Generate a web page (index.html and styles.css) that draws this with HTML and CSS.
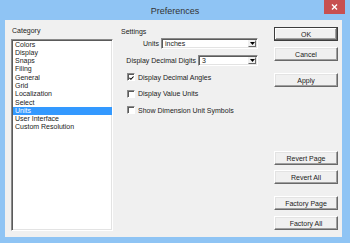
FILE: index.html
```html
<!DOCTYPE html>
<html>
<head>
<meta charset="utf-8">
<link rel="stylesheet" href="styles.css">
</head>
<body>
<div class="window">
  <div class="titlebar">
    <span class="title">Preferences</span>
    <span class="close"><svg width="7" height="6" viewBox="0 0 7 6"><path d="M1 0.5 L6 5.5 M6 0.5 L1 5.5" stroke="#fff" stroke-width="1.4"/></svg></span>
  </div>
  <div class="client">
    <div class="category">
      <div class="label">Category</div>
      <ul class="list">
        <li>Colors</li>
        <li>Display</li>
        <li>Snaps</li>
        <li>Filing</li>
        <li>General</li>
        <li>Grid</li>
        <li>Localization</li>
        <li>Select</li>
        <li class="sel">Units</li>
        <li>User Interface</li>
        <li>Custom Resolution</li>
      </ul>
    </div>
    <div class="settings">
      <div class="label">Settings</div>
      <div class="row row-units">
        <span class="row-label">Units</span>
        <div class="combo combo-wide"><span class="combo-text">inches</span><span class="drop"><svg width="5" height="3" viewBox="0 0 5 3"><path d="M0 0 H5 L2.5 3 Z" fill="#000"/></svg></span></div>
      </div>
      <div class="row row-digits">
        <span class="row-label">Display Decimal Digits</span>
        <div class="combo combo-narrow"><span class="combo-text">3</span><span class="drop"><svg width="5" height="3" viewBox="0 0 5 3"><path d="M0 0 H5 L2.5 3 Z" fill="#000"/></svg></span></div>
      </div>
      <div class="checks">
        <div class="check"><span class="box"><svg width="6" height="6" viewBox="0 0 6 6"><path d="M0.5 2.8 L2.3 4.6 L5.5 1.2" stroke="#000" stroke-width="1.3" fill="none"/></svg></span><span>Display Decimal Angles</span></div>
        <div class="check"><span class="box"></span><span>Display Value Units</span></div>
        <div class="check"><span class="box"></span><span>Show Dimension Unit Symbols</span></div>
      </div>
    </div>
    <div class="buttons">
      <div class="btn btn-default">OK</div>
      <div class="btn btn-cancel">Cancel</div>
      <div class="btn btn-apply">Apply</div>
      <div class="btn-group">
        <div class="btn">Revert Page</div>
        <div class="btn btn-revert-all">Revert All</div>
        <div class="btn btn-factory">Factory Page</div>
        <div class="btn btn-factory-all">Factory All</div>
      </div>
    </div>
  </div>
</div>
</body>
</html>
```

FILE: styles.css
```css
html, body {
  margin: 0;
  padding: 0;
  background: #ffffff;
}

.window {
  width: 350px;
  height: 243px;
  background: #8fc4f4;
  display: flex;
  flex-direction: column;
  font-family: "Liberation Sans", Arial, sans-serif;
  font-size: 7px;
  color: #222;
}

.titlebar {
  height: 20px;
  flex: none;
  position: relative;
  display: flex;
  align-items: center;
  justify-content: center;
}

.title {
  font-family: "Liberation Sans", Arial, sans-serif;
  font-size: 9px;
  font-weight: normal;
  color: #333;
  margin-top: 1px;
}

.close {
  position: absolute;
  right: 5px;
  top: 0;
  width: 21px;
  height: 14px;
  background: #c75050;
  display: flex;
  align-items: center;
  justify-content: center;
}

.close svg {
  display: block;
}

.client {
  flex: 1;
  margin: 0 8px 6px 5px;
  background: #f0f0f0;
  display: flex;
  padding: 6px 4px 6px 6px;
  min-height: 0;
}

.label {
  line-height: 9px;
  height: 9px;
  padding-left: 1px;
}

.category {
  width: 102px;
  display: flex;
  flex-direction: column;
}

.list {
  flex: 1;
  margin: 4px 0 0 0;
  padding: 0;
  list-style: none;
  background: #fff;
  border: 1px solid;
  border-color: #8a8a8a #ffffff #ffffff #8a8a8a;
  box-shadow: inset 1px 1px 0 #5a5a5a, inset -1px -1px 0 #e3e3e3;
}

.list li {
  line-height: 8.3px;
  height: 8.3px;
  padding-left: 2px;
  margin-left: 1px;
  white-space: nowrap;
}

.list li:first-child {
  margin-top: 0.5px;
}

.list li.sel {
  background: #3399ff;
  color: #fff;
}

.settings {
  width: 137px;
  margin-left: 8px;
  display: flex;
  flex-direction: column;
}

.settings .label {
  padding-left: 0;
  margin-top: 1px;
}

.row {
  display: flex;
  align-items: center;
  justify-content: flex-end;
  gap: 2px;
  height: 11px;
}

.row-units {
  margin-top: 2px;
}

.row-digits {
  margin-top: 6px;
}

.combo {
  height: 11px;
  box-sizing: border-box;
  background: #fff;
  border: 1px solid;
  border-color: #8a8a8a #ffffff #ffffff #8a8a8a;
  box-shadow: inset 1px 1px 0 #5a5a5a, inset -1px -1px 0 #e3e3e3;
  display: flex;
  align-items: stretch;
  padding: 1px;
}

.combo-wide {
  width: 97px;
}

.combo-narrow {
  width: 60px;
}

.combo-text {
  flex: 1;
  line-height: 7px;
  padding-left: 2px;
}

.drop {
  width: 8px;
  background: #f0f0f0;
  border: 1px solid;
  border-color: #f0f0f0 #696969 #696969 #f0f0f0;
  box-sizing: border-box;
  display: flex;
  align-items: center;
  justify-content: center;
}

.drop svg {
  display: block;
}

.checks {
  margin-top: 5px;
  display: flex;
  flex-direction: column;
  gap: 4.6px;
}

.check {
  height: 12px;
  display: flex;
  align-items: center;
  padding-left: 6px;
  gap: 3px;
  white-space: nowrap;
}

.box {
  width: 8px;
  height: 8px;
  box-sizing: border-box;
  background: #fff;
  border: 1px solid;
  border-color: #8a8a8a #ffffff #ffffff #8a8a8a;
  box-shadow: inset 1px 1px 0 #5a5a5a;
  display: flex;
  align-items: center;
  justify-content: center;
}

.box svg {
  display: block;
  margin: 1px 0 0 1px;
}

.buttons {
  width: 64px;
  margin-left: auto;
  display: flex;
  flex-direction: column;
}

.btn {
  height: 14px;
  box-sizing: border-box;
  background: #f0f0f0;
  border: 1px solid;
  border-color: #ffffff #696969 #696969 #ffffff;
  box-shadow: inset -1px -1px 0 #a0a0a0, inset 1px 1px 0 #e3e3e3;
  display: flex;
  align-items: center;
  justify-content: center;
  white-space: nowrap;
}

.btn-default {
  margin-top: 1px;
  border-color: #3c3c3c;
  box-shadow: inset -1px -1px 0 #696969, inset 1px 1px 0 #ffffff, inset -2px -2px 0 #a0a0a0;
}

.btn-cancel {
  margin-top: 6px;
}

.btn-apply {
  margin-top: 12px;
}

.btn-group {
  margin-top: auto;
  margin-bottom: 1px;
  display: flex;
  flex-direction: column;
}

.btn-revert-all {
  margin-top: 5px;
}

.btn-factory {
  margin-top: 12px;
}

.btn-factory-all {
  margin-top: 6px;
}
```
